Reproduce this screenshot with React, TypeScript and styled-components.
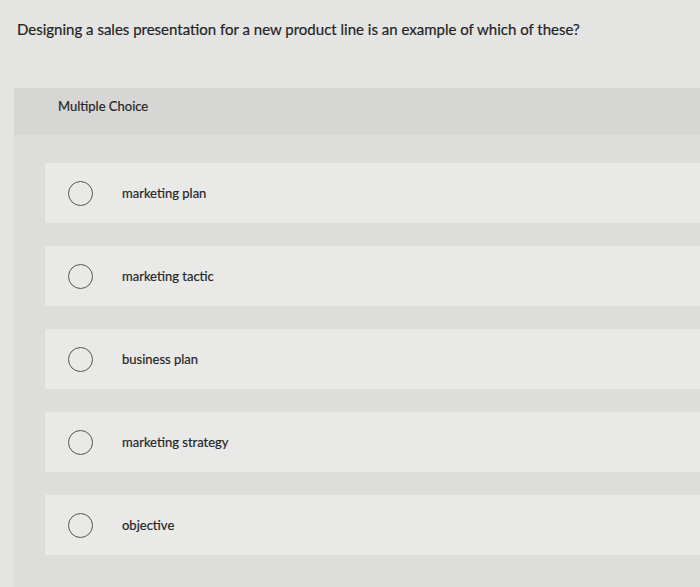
import React from "react";
import styled, { createGlobalStyle } from "styled-components";

const Global = createGlobalStyle`
  html, body { margin: 0; padding: 0; background: #e4e4e2; }
  body { font-family: Lato, "Open Sans", sans-serif; color: #2b2b2b; }
`;

const Page = styled.div`
  width: 700px;
  height: 587px;
  overflow: hidden;
  background: #e4e4e2;
`;

const Question = styled.div`
  padding: 19px 0 0 17px;
  font-size: 15px;
  line-height: 20px;
  color: #242424;
  -webkit-text-stroke: 0.2px #242424;
`;

const Panel = styled.section`
  margin: 49px 0 0 14px;
  background: #dddddb;
`;

const Header = styled.div`
  height: 47px;
  box-sizing: border-box;
  padding: 10px 0 0 44px;
  background: #d6d6d4;
  font-size: 13px;
  line-height: 16px;
  color: #262626;
  -webkit-text-stroke: 0.2px #262626;
`;

const List = styled.div`
  display: flex;
  flex-direction: column;
  gap: 23px;
  padding: 28px 0 40px 31px;
`;

const Card = styled.label`
  height: 60px;
  display: flex;
  align-items: center;
  padding-left: 23px;
  background: #e9e9e7;
  font-size: 13px;
  color: #262626;
  -webkit-text-stroke: 0.2px #262626;
`;

const Radio = styled.span`
  width: 23px;
  height: 23px;
  border: 1.5px solid #555;
  border-radius: 50%;
  flex: none;
`;

const Text = styled.span`
  margin-left: 29px;
`;

const options = [
  "marketing plan",
  "marketing tactic",
  "business plan",
  "marketing strategy",
  "objective",
];

export default function App() {
  return (
    <Page>
      <Global />
      <Question>
        Designing a sales presentation for a new product line is an example of which of these?
      </Question>
      <Panel>
        <Header>Multiple Choice</Header>
        <List>
          {options.map((o) => (
            <Card key={o}>
              <Radio />
              <Text>{o}</Text>
            </Card>
          ))}
        </List>
      </Panel>
    </Page>
  );
}
